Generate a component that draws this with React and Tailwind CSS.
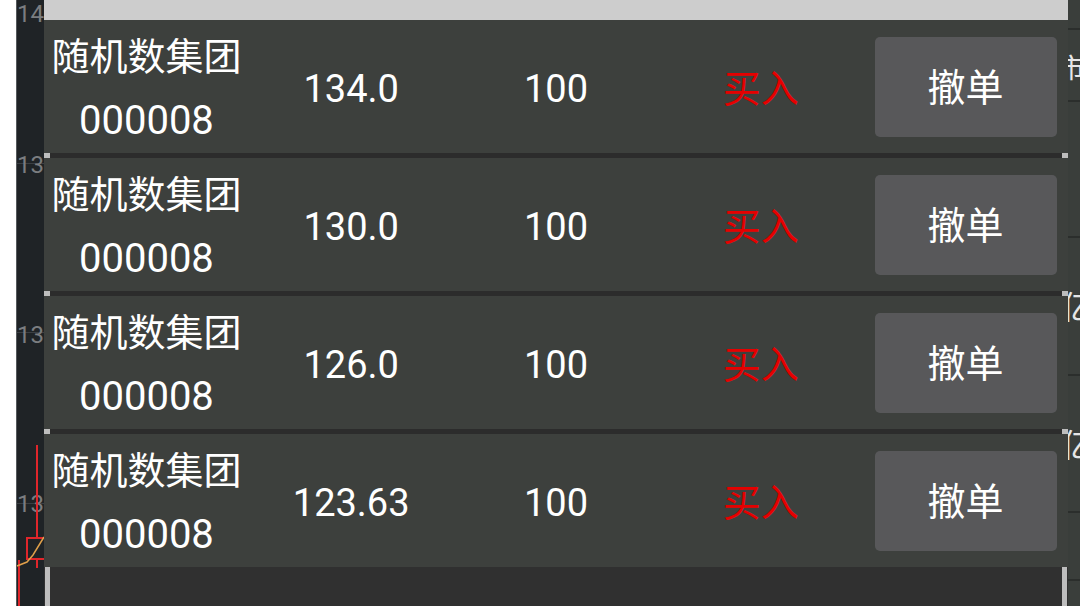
import React from "react";

const rows = [
  { price: "134.0" },
  { price: "130.0" },
  { price: "126.0" },
  { price: "123.63" },
];

function Separator() {
  return (
    <div className="flex h-[5px] shrink-0">
      <div className="w-[6px] bg-[#bdbdbd]" />
      <div className="flex-1 bg-[#2c2c2c]" />
      <div className="w-[6px] bg-[#bdbdbd]" />
    </div>
  );
}

function Row({ price }) {
  return (
    <div className="grid h-[133px] shrink-0 grid-cols-5 items-center bg-[#3d403d] text-[38px] text-white">
      <div className="flex flex-col items-center self-stretch pt-[18px]">
        <div className="h-[38px] whitespace-nowrap leading-[38px]">随机数集团</div>
        <div className="mt-[25px] h-[40px] text-[40px] leading-[40px]">000008</div>
      </div>
      <div className="pt-[4px] text-center leading-[38px]">{price}</div>
      <div className="pt-[4px] text-center leading-[38px]">100</div>
      <div className="pt-[4px] text-center leading-[38px] text-[#e60000]">买入</div>
      <div className="flex justify-center">
        <div className="flex h-[100px] w-[182px] items-center justify-center rounded-[5px] bg-[#58585a] pt-[3px] leading-[38px]">
          撤单
        </div>
      </div>
    </div>
  );
}

function LeftChart() {
  return (
    <svg width="28" height="606" viewBox="0 0 28 606" className="block">
      <rect x="0" y="0" width="28" height="606" fill="#1f2326" />
      <line x1="0.5" y1="0" x2="0.5" y2="606" stroke="#55595c" strokeWidth="1" />
      <line x1="1" y1="163.5" x2="28" y2="163.5" stroke="#3b3f43" strokeWidth="1" />
      <line x1="1" y1="332.5" x2="28" y2="332.5" stroke="#3b3f43" strokeWidth="1" />
      <line x1="1" y1="503.5" x2="28" y2="503.5" stroke="#3b3f43" strokeWidth="1" />
      <g fill="#7b7d80" fontSize="24" fontFamily="Roboto, 'Liberation Sans', sans-serif">
        <text x="1" y="22">14</text>
        <text x="1" y="173">13</text>
        <text x="1" y="343">13</text>
        <text x="1" y="512">13</text>
      </g>
      <g stroke="#e0262b" strokeWidth="2" fill="none">
        <line x1="21" y1="445" x2="21" y2="538" />
        <rect x="11" y="538" width="24" height="21" />
        <line x1="21" y1="559" x2="21" y2="568" />
        <line x1="3" y1="560" x2="3" y2="606" />
      </g>
      <polyline
        points="1,566 11,562 17,555 28,537"
        fill="none"
        stroke="#e0a04a"
        strokeWidth="1.5"
      />
    </svg>
  );
}

function RightChart() {
  return (
    <svg width="12" height="606" viewBox="0 0 12 606" className="block">
      <rect x="0" y="0" width="12" height="606" fill="#3a3e3b" />
      <g stroke="#2b2e2c" strokeWidth="2">
        <line x1="0" y1="29" x2="12" y2="29" />
        <line x1="0" y1="101" x2="12" y2="101" />
        <line x1="0" y1="237" x2="12" y2="237" />
        <line x1="0" y1="375" x2="12" y2="375" />
        <line x1="0" y1="512" x2="12" y2="512" />
        <line x1="0" y1="580" x2="12" y2="580" />
      </g>
      <g fill="#e6e6e6" fontFamily="'Noto Sans CJK SC', sans-serif">
        <text x="-10" y="78" fontSize="27">市</text>
        <text x="-7" y="319" fontSize="32">亿</text>
        <text x="-7" y="457" fontSize="32">亿</text>
      </g>
    </svg>
  );
}

export default function App() {
  return (
    <div className="flex h-[606px] w-[1080px] overflow-hidden bg-white font-['Roboto','Noto_Sans_CJK_SC',sans-serif]">
      <div className="w-[16px] shrink-0 bg-white" />
      <div className="w-[28px] shrink-0">
        <LeftChart />
      </div>
      <div className="flex w-[1024px] shrink-0 flex-col bg-[#303030]">
        <div className="h-[20px] shrink-0 bg-[#cdcdcd]" />
        {rows.map((r, i) => (
          <React.Fragment key={i}>
            {i > 0 && <Separator />}
            <Row price={r.price} />
          </React.Fragment>
        ))}
        <div className="flex flex-1">
          <div className="ml-px w-[5px] bg-[#bdbdbd]" />
          <div className="flex-1" />
          <div className="mr-px w-[5px] bg-[#bdbdbd]" />
        </div>
      </div>
      <div className="w-[12px] shrink-0">
        <RightChart />
      </div>
    </div>
  );
}
